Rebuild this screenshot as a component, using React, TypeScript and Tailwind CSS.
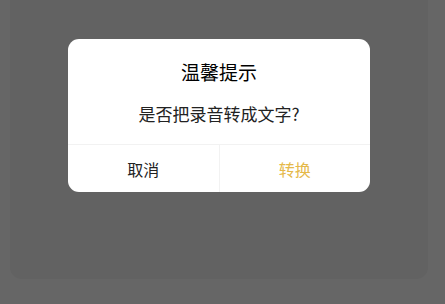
export default function App() {
  const font = { fontFamily: '"Noto Sans CJK SC", "Noto Sans", sans-serif' };
  return (
    <div className="w-[445px] h-[304px] bg-[#666666] overflow-hidden" style={font}>
      <div className="ml-[10px] mr-[17px] h-[279px] rounded-b-[12px] bg-[#626262] pt-[39px] pl-[58px]">
        <div className="w-[302px] rounded-[11px] bg-white overflow-hidden">
          <div className="flex flex-col items-center pt-[20px] pb-[18px]">
            <div className="text-[19px] leading-[26px] text-[#000000]">温馨提示</div>
            <div className="mt-[17px] text-[17px] leading-[24px] text-[#222222]">是否把录音转成文字?</div>
          </div>
          <div className="flex h-[48px] border-t border-[#f2f2f2]">
            <div className="flex-1 flex items-center justify-center text-[16px] text-[#222222] border-r border-[#f2f2f2]">取消</div>
            <div className="flex-1 flex items-center justify-center text-[16px] text-[#e5b94a]">转换</div>
          </div>
        </div>
      </div>
    </div>
  );
}
